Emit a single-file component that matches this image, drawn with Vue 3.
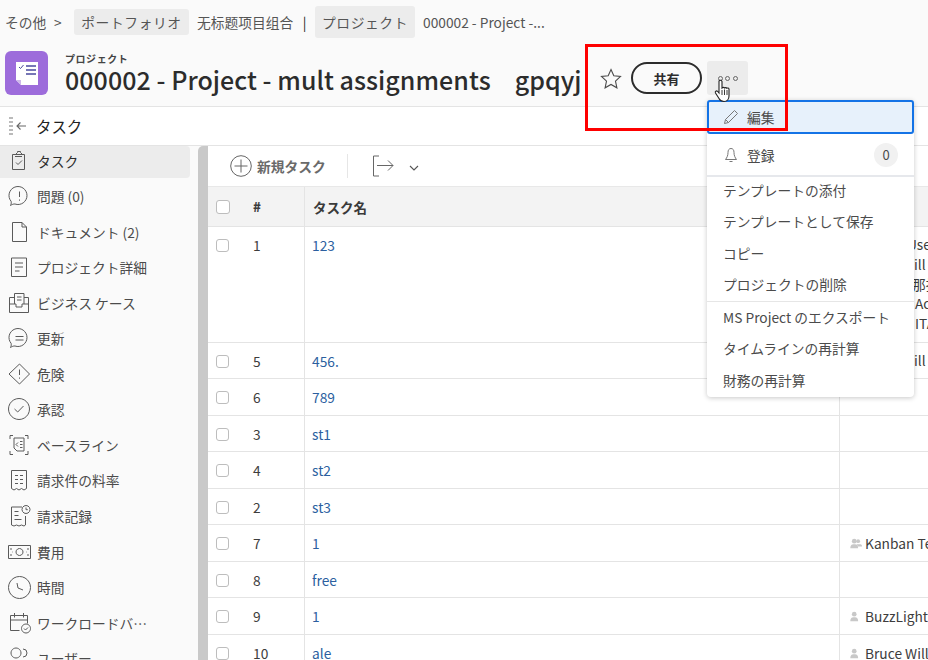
<script setup>
const nav = [
  { label: 'タスク', active: true, d: 'M7 5.500h10.500v15H5.500v-15H7zM8.500 5.500l2-2V2.500h3v1l2 2M8 7.500h7M9 13.500l2 2 4-4' },
  { label: '問題 (0)', d: 'M3.500 21.500c1-2 .8-3 .6-4.200A9 9 0 1 1 8 20c-1.500-.2-3 .5-4.500 1.500zM12.500 7.500v5.500M12.500 15.500v1.200' },
  { label: 'ドキュメント (2)', d: 'M5.500 2.500h9.500l4.500 4.500v14.500h-14zM15 2.500v4.500h4.500' },
  { label: 'プロジェクト詳細', d: 'M4.500 3h15v18.500h-15zM8 8h8M8 12h8M8 16h4.500' },
  { label: 'ビジネス ケース', d: 'M7.500 13V2.500h9.500V13M10 6h4.500M10 9h4.500M2.500 6.500h5M17 6.500h4.500v15h-19v-15M2.500 13h6.500v3h6v-3h6.500' },
  { label: '更新', d: 'M3.500 21.500c1-2 .8-3 .6-4.200A9 9 0 1 1 8 20c-1.500-.2-3 .5-4.500 1.500zM8.500 10.500h8M8.500 14h8' },
  { label: '危険', d: 'M12.500 2L22.500 12 12.500 22 2 12zM12.500 7.500v5.500M12.500 15.500v1.200' },
  { label: '承認', d: 'M12 1.500a10.500 10.500 0 1 0 .01 0zM7.500 12l3.200 3L16.500 9' },
  { label: 'ベースライン', d: 'M3 6V2.500h3M18 2.500h3V6M3 18v3.500h3M18 21.500h3V18M7 5h10v13h-7l-3-3zM13 8.500h2.500M13 11.500h2.500M13 14.500h2.500M9 11.500l2-2M9 11.500l2 2' },
  { label: '請求件の料率', d: 'M4.500 2.500h15v18l-2.500 1.500-2.500-1.500-2.500 1.500-2.500-1.500-2.500 1.500-2.500-1.500zM8 7.500h3M13 7.500h3M8 11.500h3M13 11.500h3M8 15.500h3M13 15.500h3' },
  { label: '請求記録', d: 'M15 3H4.500v18l2.500 1 2.500-1 2.500 1 2.500-1 2.500 1 1.500-1v-9M7.500 7.500h4M7.500 11.500h4M7.500 15.500h7M19 1.500a4 4 0 1 0 .01 0zM19 3.500v2.200h1.800' },
  { label: '費用', d: 'M1.500 5.500h22v13h-22zM12.500 8.500a3.500 3.500 0 1 0 .01 0zM4 8v2M4 14v2M21 8v2M21 14v2M5.500 12h.5M19 12h.5' },
  { label: '時間', d: 'M12.500 1.500a11 11 0 1 0 .01 0zM10 8l1 5 5 2' },
  { label: 'ワークロードバ…', d: 'M3.500 4.500h17v8M3.500 4.500v15h9M7.500 2v4.500M16.500 2v4.500M3.500 9h17M19 13a4.500 4.500 0 1 0 .01 0zM17 17.500l1.500 1.500 2.500-2.500' },
  { label: 'ユーザー', d: 'M9 2a5 5 0 1 0 .01 0zM16 3a4 4 0 1 1 0 8' },
]
const rows = [
  { n: 1, name: '123', h: 116, lines: [{ t: 'Use', x: 67 }, { t: 'Will', x: 62 }, { t: '那拉', x: 72 }, { t: 'Ac', x: 75 }, { t: 'ITA', x: 75 }] },
  { n: 5, name: '456.', h: 36, lines: [{ t: 'Will', x: 62 }] },
  { n: 6, name: '789', h: 37 },
  { n: 3, name: 'st1', h: 36 },
  { n: 4, name: 'st2', h: 37 },
  { n: 2, name: 'st3', h: 36 },
  { n: 7, name: '1', h: 37, who: 'Kanban Team', group: true },
  { n: 8, name: 'free', h: 36 },
  { n: 9, name: '1', h: 37, who: 'BuzzLightyear' },
  { n: 10, name: 'ale', h: 36, who: 'Bruce Willis' },
]
const menuA = ['テンプレートの添付', 'テンプレートとして保存', 'コピー', 'プロジェクトの削除']
const menuB = ['MS Project のエクスポート', 'タイムラインの再計算', '財務の再計算']
</script>

<template>
  <div class="page">
    <div class="crumbs">
      <span class="crumb-text first">その他</span>
      <span class="gt">&gt;</span>
      <span class="pill small">ポートフォリオ</span>
      <span class="crumb-text zh">无标题项目组合</span>
      <span class="bar">|</span>
      <span class="pill">プロジェクト</span>
      <span class="crumb-text">000002 - Project -...</span>
    </div>

    <div class="head">
      <div class="logo">
        <svg width="26" height="28" viewBox="0 0 26 28">
          <path d="M2 3h22v23H7l-5-5z" fill="#fff" />
          <path d="M2 21h5v5z" fill="#cdb7ea" />
          <path d="M5 8l1.500 1.500L9.500 6" fill="none" stroke="#4b4b9c" stroke-width="1" />
          <path d="M12 7h10M12 11h10M12 15h10" stroke="#4a4a9e" stroke-width="1.600" fill="none" />
        </svg>
      </div>
      <div class="titles">
        <div class="kicker">プロジェクト</div>
        <h1 class="title">000002 - Project - mult assignments<span class="suffix">gpqyj</span></h1>
      </div>
      <svg class="star" width="22" height="22" viewBox="0 0 22 22">
        <path d="M11 1.500l2.800 6.300 6.700.7-5 4.600 1.400 6.700L11 16.400l-5.900 3.400 1.400-6.700-5-4.600 6.700-.7z" fill="none" stroke="#4b4b4b" stroke-width="1.100" />
      </svg>
      <button class="share">共有</button>
      <div class="more">
        <i></i><i></i><i></i>
      </div>
    </div>

    <div class="taskbar">
      <svg width="20" height="20" viewBox="0 0 20 20">
        <path d="M1 2h4M1 6h4M1 10h4M1 14h4M1 18h4" stroke="#777" stroke-width="1.200" fill="none" />
        <path d="M18 10H9M12.500 6.500L9 10l3.500 3.500" stroke="#666" stroke-width="1.100" fill="none" />
      </svg>
      <span>タスク</span>
    </div>

    <div class="body">
      <nav class="side">
        <a v-for="item in nav" :key="item.label" class="nav-item" :class="{ on: item.active }">
          <svg class="nav-icon" width="24" height="24" viewBox="0 0 24 24">
            <path :d="item.d" fill="none" stroke="#5a5a5a" stroke-width="1" />
          </svg>
          <span>{{ item.label }}</span>
        </a>
      </nav>
      <div class="scroll"></div>
      <main class="main">
        <div class="tools">
          <svg width="22" height="22" viewBox="0 0 22 22">
            <circle cx="11" cy="11" r="10.300" fill="none" stroke="#666" stroke-width="1" />
            <path d="M11 4.500v13M4.500 11h13" stroke="#666" stroke-width="1" />
          </svg>
          <span class="new">新規タスク</span>
          <span class="tool-sep"></span>
          <svg width="22" height="22" viewBox="0 0 22 22">
            <path d="M7 1H1.500v20H7M5 10.500h16M16 5.500l5 5-5 5" fill="none" stroke="#666" stroke-width="1" />
          </svg>
          <svg class="chev" width="10" height="6" viewBox="0 0 10 6">
            <path d="M1 1l4 4 4-4" fill="none" stroke="#555" stroke-width="1.100" />
          </svg>
        </div>
        <div class="row thead">
          <div class="c-a"><span class="check large"></span><b class="num">#</b></div>
          <div class="c-b">タスク名</div>
          <div class="c-c"></div>
        </div>
        <div v-for="r in rows" :key="r.n" class="row" :style="{ height: r.h + 'px' }">
          <div class="c-a"><span class="check"></span><span class="num">{{ r.n }}</span></div>
          <div class="c-b link">{{ r.name }}</div>
          <div class="c-c">
            <div v-if="r.lines" class="lines">
              <div v-for="l in r.lines" :key="l.t" :style="{ paddingLeft: l.x + 'px' }">{{ l.t }}</div>
            </div>
            <div v-else-if="r.who" class="who">
              <svg class="who-icon" width="14" height="11" viewBox="0 0 18 14">
                <g fill="#c8c8c8">
                  <circle v-if="r.group" cx="13" cy="4" r="2.500" />
                  <path v-if="r.group" d="M11 8h5c1.500 0 2 1.500 2 3h-5z" />
                  <circle cx="8" cy="4" r="3" />
                  <path d="M3 13c0-3 1-5 5-5s5 2 5 5z" />
                </g>
              </svg>
              <span>{{ r.who }}</span>
            </div>
          </div>
        </div>
      </main>
    </div>

    <div class="menu">
      <div class="m-item sel">
        <svg width="16" height="16" viewBox="0 0 16 16">
          <path d="M1.500 14.500l1-4L11.500 1.500l3 3-9 9zM2.500 10.500l3 3" fill="none" stroke="#777" stroke-width="1" />
        </svg>
        <span>編集</span>
      </div>
      <div class="m-item sub">
        <svg width="16" height="16" viewBox="0 0 16 16">
          <path d="M8 1.500c-2 0-3 1.500-3 4 0 3-1 5-2.500 7h11c-1.500-2-2.500-4-2.500-7 0-2.500-1-4-3-4zM6.500 14.500h3" fill="none" stroke="#777" stroke-width="1" />
        </svg>
        <span>登録</span>
        <em class="count">0</em>
      </div>
      <div class="m-group">
        <div v-for="m in menuA" :key="m" class="m-line">{{ m }}</div>
      </div>
      <div class="m-group last">
        <div v-for="m in menuB" :key="m" class="m-line">{{ m }}</div>
      </div>
    </div>

    <svg class="cursor" width="20" height="24" viewBox="0 0 20 24">
      <path d="M5 2c1-1 2.500-1 3 .5V9c1-.8 2-.8 2.500 0 .8-.6 1.800-.5 2.300.3.800-.5 2-.3 2.200.7V17c0 3-2 5.500-5 5.500-2.500 0-4-1-5-3L1.500 14c-.8-1.500 1-2.800 2.200-1.500L5 14z" fill="#fff" stroke="#222" stroke-width="1.100" />
      <path d="M8 11v5M10.500 10.500V16M13 11v5" stroke="#222" stroke-width=".9" />
    </svg>
    <div class="redbox"></div>
  </div>
</template>

<style scoped>
.page {
  position: relative;
  width: 928px;
  height: 660px;
  overflow: hidden;
  background: #fafafa;
  color: #4b4b4b;
  font-family: "Noto Sans CJK JP", "Noto Sans", sans-serif;
  font-size: 13.750px;
}
.crumbs {
  height: 32px;
  padding-top: 6px;
  padding-left: 5px;
  display: flex;
  align-items: center;
}
.crumb-text { color: #555; white-space: nowrap; font-size: 13.750px; }
.crumb-text.first { width: 41px; }
.crumb-text.zh { font-family: "Noto Sans CJK SC", sans-serif; margin-left: 8px; width: 97px; }
.gt { margin-left: 8px; width: 20px; color: #555; }
.bar { width: 21px; text-align: center; color: #222; }
.pill {
  background: #ececec;
  border-radius: 3px;
  height: 32px;
  line-height: 32px;
  width: 100px;
  text-align: center;
  margin-right: 8px;
  letter-spacing: .6px;
  color: #555;
}
.pill.small { height: 26px; line-height: 26px; width: 115px; margin-right: 0; }
.head {
  height: 68px;
  border-bottom: 1px solid #e4e4e4;
  padding-left: 5px;
  display: flex;
  align-items: center;
}
.logo {
  width: 43px;
  height: 44px;
  border-radius: 6px;
  background: #9d6cdb;
  display: flex;
  align-items: center;
  justify-content: center;
  margin-top: 1px;
}
.titles { margin-left: 17px; width: 524px; margin-top: 1px; flex: none; }
.kicker { font-size: 10px; font-weight: 700; line-height: 12px; letter-spacing: .55px; color: #444; }
.title {
  margin: 0;
  font-size: 25px;
  font-weight: 500;
  letter-spacing: .05px;
  line-height: 28px;
  color: #2c2c2c;
  white-space: nowrap;
}
.suffix { margin-left: 24px; }
.star { margin-left: 11px; margin-top: 14px; flex: none; }
.share {
  margin-left: 9px;
  margin-top: 12px;
  width: 71px;
  height: 32px;
  border: 2px solid #2c2c2c;
  border-radius: 16px;
  background: #fafafa;
  color: #2c2c2c;
  font: 700 13px "Noto Sans CJK JP", sans-serif;
  padding: 0;
  flex: none;
}
.more {
  margin-left: 5px;
  margin-top: 12px;
  width: 41px;
  height: 34px;
  background: #ececec;
  border-radius: 3px;
  display: flex;
  align-items: center;
  justify-content: center;
  gap: 2.500px;
  flex: none;
}
.more i {
  width: 5px;
  height: 5px;
  border: 1px solid #666;
  border-radius: 50%;
  box-sizing: border-box;
}
.taskbar {
  height: 38px;
  border-bottom: 1px solid #e4e4e4;
  background: #fff;
  display: flex;
  align-items: center;
  padding-left: 8px;
  gap: 8px;
  font-size: 15.400px;
  color: #222;
}
.body { display: flex; height: 520px; background: #fafafa; }
.side { width: 198px; flex: none; display: flex; flex-direction: column; gap: 3.550px; }
.nav-item {
  width: 190px;
  height: 32px;
  flex: none;
  display: flex;
  align-items: center;
  padding: 0 0 3px 8px;
  box-sizing: border-box;
  gap: 7px;
  border-radius: 0 4px 4px 0;
  color: #4b4b4b;
  white-space: nowrap;
}
.nav-item.on { background: #ececec; color: #2c2c2c; }
.nav-icon { flex: none; margin-left: -1px; margin-right: -1px; }
.scroll { width: 10px; flex: none; background: #c9c9c9; border-radius: 5px 0 0 0; }
.main { flex: 1; min-width: 0; background: #fff; }
.tools {
  height: 40px;
  display: flex;
  align-items: center;
  padding-left: 22px;
}
.new { margin-left: 5px; font-weight: 700; color: #6a6a6a; width: 90px; }
.tool-sep { width: 1px; height: 24px; background: #e6e6e6; margin-right: 24px; }
.chev { margin-left: 15px; margin-top: 4px; }
.row {
  display: flex;
  border-top: 1px solid #e4e4e4;
  box-sizing: border-box;
  background: #fff;
}
.row.thead { height: 40px; background: #f3f3f3; border-top-color: #e8e8e8; font-weight: 700; }
.c-a {
  width: 97px;
  flex: none;
  box-sizing: border-box;
  border-right: 1px solid #e4e4e4;
  padding: 8px 0 0 8px;
  display: flex;
  align-items: flex-start;
}
.c-b {
  width: 535px;
  flex: none;
  box-sizing: border-box;
  border-right: 1px solid #e4e4e4;
  padding: 8px 0 0 7px;
  line-height: 20px;
  color: #3a3a3a;
}
.thead .c-b, .thead .c-a { padding-top: 10px; }
.thead .c-b { padding-left: 8px; font-size: 13.500px; }
.thead .c-a b { font-size: 13px; }
.link { color: #2c5f9f; }
.c-c { flex: 1; min-width: 0; overflow: hidden; white-space: nowrap; color: #3d3d3d; }
.check {
  width: 13px;
  height: 13px;
  border: 1px solid #bdbdbd;
  border-radius: 3px;
  background: #fff;
  flex: none;
  box-sizing: border-box;
  margin-top: 4px;
}
.check.large { width: 14px; height: 14px; margin-top: 3px; }
.num { margin-left: 24px; line-height: 20px; color: #3d3d3d; }
.large + .num { margin-left: 23px; }
.lines { padding-top: 8px; line-height: 19.800px; }
.who { display: flex; align-items: center; gap: 3px; padding: 8px 0 0 8px; line-height: 20px; }
.who-icon { flex: none; }
.menu {
  position: absolute;
  left: 707px;
  top: 100px;
  width: 207px;
  height: 297px;
  background: #fff;
  border-radius: 4px;
  box-shadow: 0 1px 5px rgba(0, 0, 0, .22);
}
.m-item {
  display: flex;
  align-items: center;
  padding-left: 16px;
  gap: 8px;
  color: #4b4b4b;
}
.m-item.sel {
  height: 34px;
  background: #e7f1fb;
  border: 2px solid #1473e6;
  border-radius: 3px;
  box-sizing: border-box;
  padding-left: 14px;
}
.m-item.sub { height: 41px; border-bottom: 2px solid #e6e8ec; }
.count {
  margin-left: auto;
  margin-right: 16px;
  width: 24px;
  height: 24px;
  border-radius: 50%;
  background: #f1f1f1;
  text-align: center;
  line-height: 24px;
  font-style: normal;
  font-size: 13px;
}
.m-group { padding-left: 16px; border-bottom: 1px solid #e6e6e6; margin-top: -2.500px; }
.m-group.last { border-bottom: 0; margin-top: 0; }
.m-line { height: 31.600px; line-height: 31.600px; color: #4b4b4b; white-space: nowrap; }
.cursor { position: absolute; left: 714px; top: 79px; }
.redbox {
  position: absolute;
  left: 585px;
  top: 44px;
  width: 203px;
  height: 87px;
  border: 3px solid #fe0000;
  box-sizing: border-box;
  pointer-events: none;
}
</style>
